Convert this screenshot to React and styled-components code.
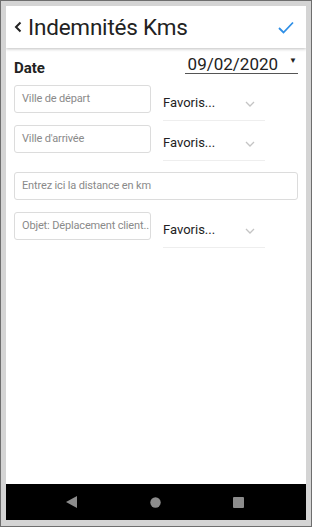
import React from 'react';
import styled, { createGlobalStyle } from 'styled-components';

const GlobalStyle = createGlobalStyle`
  html, body {
    margin: 0;
    padding: 0;
    background: #d4d4d4;
  }
  body {
    font-family: Roboto, "Noto Sans", sans-serif;
  }
  * {
    box-sizing: border-box;
  }
`;

const Frame = styled.div`
  width: 312px;
  height: 527px;
  border: 1px solid #6e6e6e;
  background: #d4d4d4;
  padding: 5px 5px 6px 5px;
  display: flex;
`;

const Screen = styled.div`
  flex: 1;
  display: flex;
  flex-direction: column;
  background: #fff;
  overflow: hidden;
`;

const Header = styled.div`
  height: 42px;
  display: flex;
  align-items: center;
  padding: 0 12px 0 8px;
  background: #fff;
  box-shadow: 0 1px 3px rgba(0, 0, 0, 0.25);
  position: relative;
  z-index: 1;
`;

const Title = styled.h1`
  margin: 0 0 0 6px;
  font-size: 22.5px;
  font-weight: 400;
  color: #222;
  flex: 1;
  letter-spacing: -0.2px;
`;

const Content = styled.div`
  flex: 1;
  padding: 9px 8px 0 8px;
`;

const DateRow = styled.div`
  display: flex;
  justify-content: space-between;
  align-items: flex-start;
  margin-bottom: 8px;
`;

const DateLabel = styled.span`
  font-size: 15px;
  font-weight: 700;
  color: #222;
  padding-top: 2px;
`;

const DateField = styled.div`
  width: 113px;
  height: 19px;
  border-bottom: 1px solid #555;
  display: flex;
  align-items: center;
  justify-content: flex-end;
  font-size: 17px;
  color: #222;
  gap: 11px;
  padding-right: 1px;
  margin-top: -2px;
`;

const Caret = styled.span`
  font-size: 8px;
  position: relative;
  top: -4px;
`;

const Row = styled.div`
  display: flex;
  align-items: flex-start;
  margin-bottom: ${p => p.$gap || 4}px;
`;

const Input = styled.div`
  width: ${p => (p.$full ? '100%' : '137px')};
  height: 28px;
  border: 1px solid #dcdcdc;
  border-radius: 3px;
  padding: 0 6px 2px 7px;
  display: flex;
  align-items: center;
  font-size: 11px;
  letter-spacing: -0.15px;
  color: #8a8a8a;
  white-space: nowrap;
  overflow: hidden;
  flex-shrink: 0;
`;

const Select = styled.div`
  width: 102px;
  height: 36px;
  margin-left: 12px;
  border-bottom: 1px solid #eeeeee;
  display: flex;
  align-items: center;
  font-size: 13px;
  color: #222;
  padding-right: 10px;
`;

const Chevron = styled.svg`
  margin-left: auto;
  margin-top: 2px;
`;

const NavBar = styled.div`
  height: 36px;
  background: #000;
  display: flex;
  align-items: center;
  justify-content: center;
  gap: 72px;
  padding-right: 3px;
`;

const Down = () => (
  <Chevron width="10" height="6" viewBox="0 0 10 6">
    <polyline points="1,1 5,5 9,1" fill="none" stroke="#c4c4c4" strokeWidth="1.3" />
  </Chevron>
);

const Field = ({ placeholder, gap }) => (
  <Row $gap={gap}>
    <Input>{placeholder}</Input>
    <Select>
      Favoris...
      <Down />
    </Select>
  </Row>
);

const App = () => (
  <>
    <GlobalStyle />
    <Frame>
      <Screen>
        <Header>
          <svg width="8" height="12" viewBox="0 0 8 12">
            <polyline points="6.5,1.5 2,6 6.5,10.5" fill="none" stroke="#222" strokeWidth="2" />
          </svg>
          <Title>Indemnités Kms</Title>
          <svg width="16" height="13" viewBox="0 0 16 13">
            <polyline points="1,7 5.5,11.5 15,1.5" fill="none" stroke="#2f8fe6" strokeWidth="1.8" />
          </svg>
        </Header>
        <Content>
          <DateRow>
            <DateLabel>Date</DateLabel>
            <DateField>
              09/02/2020
              <Caret>▼</Caret>
            </DateField>
          </DateRow>
          <Field placeholder="Ville de départ" />
          <Field placeholder="Ville d'arrivée" gap={11} />
          <Row $gap={12}>
            <Input $full>Entrez ici la distance en km</Input>
          </Row>
          <Field placeholder="Objet: Déplacement client.." />
        </Content>
        <NavBar>
          <svg width="12" height="12" viewBox="0 0 12 12">
            <polygon points="11,0 11,12 0,6" fill="#8c8c8c" />
          </svg>
          <svg width="11" height="11" viewBox="0 0 11 11">
            <circle cx="5.5" cy="5.5" r="5.2" fill="#8c8c8c" />
          </svg>
          <svg width="11" height="11" viewBox="0 0 11 11">
            <rect x="0" y="0" width="11" height="11" rx="1" fill="#8c8c8c" />
          </svg>
        </NavBar>
      </Screen>
    </Frame>
  </>
);

export default App;
